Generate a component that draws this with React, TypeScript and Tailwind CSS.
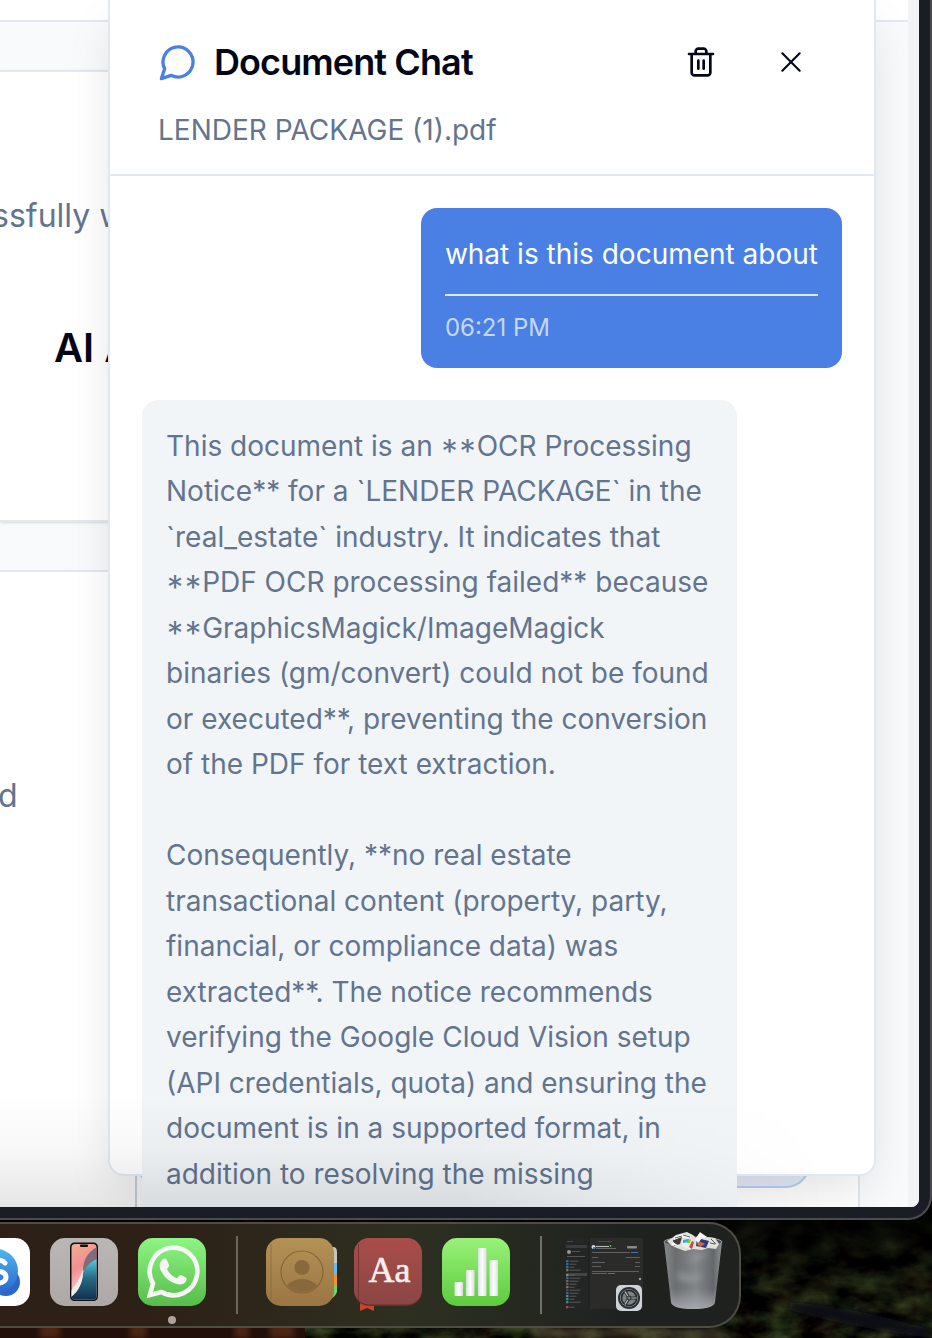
import type { ReactNode } from "react";

const REPLY = [
  "This document is an **OCR Processing Notice** for a `LENDER PACKAGE` in the `real_estate` industry. It indicates that **PDF OCR processing failed** because **GraphicsMagick/ImageMagick\nbinaries (gm/convert) could not be found or executed**, preventing the conversion of the PDF for text extraction.",
  "Consequently, **no real estate transactional content (property, party, financial, or compliance data) was extracted**. The notice recommends verifying the Google Cloud Vision setup (API credentials, quota) and ensuring the document is in a supported format, in addition to resolving the missing",
].join("\n\n");

/* Asterisks that open a capitalised phrase use the capital-height glyphs. */
function MessageText({ text }: { text: string }) {
  return (
    <p className="whitespace-pre-line">
      {text.split(/(\*\*(?=[A-Z]))/).map((part, i) =>
        part === "**" ? (
          <span key={i} className="[font-feature-settings:'case'_1]">
            {part}
          </span>
        ) : (
          part
        ),
      )}
    </p>
  );
}

function StrokeIcon({ className, children }: { className: string; children: ReactNode }) {
  return (
    <svg
      viewBox="0 0 24 24"
      fill="none"
      stroke="currentColor"
      strokeLinecap="round"
      strokeLinejoin="round"
      aria-hidden="true"
      className={className}
    >
      {children}
    </svg>
  );
}

function Wallpaper() {
  return (
    <svg
      className="absolute inset-x-0 bottom-0 h-36 w-full"
      viewBox="0 0 932 144"
      preserveAspectRatio="none"
      aria-hidden="true"
    >
      <defs>
        <filter id="leaves" x="0" y="0" width="100%" height="100%" colorInterpolationFilters="sRGB">
          <feTurbulence type="fractalNoise" baseFrequency="0.03 0.05" numOctaves="4" seed="8" />
          <feColorMatrix values="0.45 0.1 0 0 -0.19  0.55 0 0 0 -0.18  0.25 0 0 0 -0.08  0 0 0 0 1" />
        </filter>
        <linearGradient id="shade" x1="0" y1="0" x2="0" y2="1">
          <stop offset="0.15" stopColor="#000" stopOpacity="0.9" />
          <stop offset="0.5" stopColor="#000" stopOpacity="0.4" />
          <stop offset="1" stopColor="#000" stopOpacity="0" />
        </linearGradient>
        <filter id="soft">
          <feGaussianBlur stdDeviation="3" />
        </filter>
      </defs>
      <rect width="932" height="144" filter="url(#leaves)" />
      <rect width="932" height="144" fill="url(#shade)" />
      <path d="M0 130h305v14H0z" fill="#220f0a" />
      <path d="M235 130h14v14h-14zM270 130h24v14h-24zM40 130h20v14H40zM130 130h16v14h-16z" fill="#5c2c16" opacity="0.8" filter="url(#soft)" />
      <path d="M790 108q70 6 142 28v8q-80-10-142-28z" fill="#0b0e16" filter="url(#soft)" />
      <path d="M530 134h180l20 10H530z" fill="#6b5a44" opacity="0.5" filter="url(#soft)" />
    </svg>
  );
}

function BackgroundPage() {
  return (
    <div className="flex h-full bg-slate-50">
      <div className="flex min-w-0 flex-1 flex-col">
        <div className="h-[22px] shrink-0 border-b-2 border-slate-200 bg-white" />
        <div className="mr-12 flex min-h-0 flex-1 flex-col">
          <section className="mt-12 flex h-[452px] shrink-0 flex-col border-y-2 border-slate-200 bg-white pt-[120px] shadow-sm">
            <p className="-ml-2 text-[32px] leading-12 text-slate-500">ssfully w</p>
            <h2 className="mt-[84px] ml-[54px] text-[40px] leading-12 font-semibold text-slate-950">AI A</h2>
          </section>
          <section className="mt-12 flex min-h-0 flex-1 flex-col border-t-2 border-r-2 border-slate-200 bg-white">
            <p className="-ml-0.5 pt-[200px] text-[32px] leading-12 text-slate-500">d</p>
            <div className="mt-auto ml-[135px] flex h-[340px] items-start border-l-2 border-slate-300 pr-12">
              <div className="h-[321px] flex-1 rounded-3xl border-2 border-[#b9d2f8] bg-[#e6edf9]" />
            </div>
          </section>
        </div>
      </div>
      <div className="w-[11px] bg-[#f2f3f5]" />
    </div>
  );
}

function ChatPanel() {
  return (
    <aside
      aria-label="Document Chat"
      className="absolute top-0 right-[43px] bottom-[31px] left-[108px] flex flex-col rounded-b-2xl border-x-2 border-b-2 border-slate-200 bg-white shadow-[0_20px_50px_-8px_rgba(0,0,0,0.13)]"
    >
      <header className="border-b-2 border-slate-200 pt-[26px] pr-[47px] pb-6 pl-12">
        <div className="flex items-center justify-between">
          <h1 className="flex items-center gap-4 text-4xl font-semibold tracking-tight text-slate-950">
            <StrokeIcon className="size-10 stroke-2 text-[#4a80e4]">
              <path d="M7.9 20A9 9 0 1 0 4 16.1L2 22Z" />
            </StrokeIcon>
            Document Chat
          </h1>
          <div className="flex gap-[18px] text-slate-950">
            <button type="button" aria-label="Clear chat" className="flex size-18 items-center justify-center">
              <StrokeIcon className="size-8 stroke-2">
                <path d="M3 6h18M19 6v14c0 1-1 2-2 2H7c-1 0-2-1-2-2V6M8 6V4c0-1 1-2 2-2h4c1 0 2 1 2 2v2M10 11v6M14 11v6" />
              </StrokeIcon>
            </button>
            <button type="button" aria-label="Close chat" className="flex size-18 items-center justify-center">
              <StrokeIcon className="size-8 stroke-[1.6]">
                <path d="M18.500 5.500l-13 13M5.500 5.500l13 13" />
              </StrokeIcon>
            </button>
          </div>
        </div>
        <p className="mt-3 text-[28px] leading-10 text-slate-500">LENDER PACKAGE (1).pdf</p>
      </header>

      <div className="flex min-h-0 flex-1 flex-col gap-8 p-8 text-[28px] leading-relaxed">
        <div className="shrink-0 self-end rounded-2xl bg-[#4a80e4] p-6 text-white">
          <p>what is this document about</p>
          <time className="mt-4 block border-t-2 border-slate-200 pt-4 text-2xl text-white/70">06:21 PM</time>
        </div>
        <div className="max-w-[85%] shrink-0 self-start rounded-2xl bg-[#f1f5f8] p-6 text-slate-500">
          <MessageText text={REPLY} />
        </div>
      </div>
    </aside>
  );
}

function SkypeIcon() {
  return (
    <svg viewBox="0 0 68 68" className="-ml-[38px] size-17 shrink-0" aria-hidden="true">
      <defs>
        <linearGradient id="sky" x1="0" y1="0" x2="0" y2="1">
          <stop offset="0" stopColor="#4fb5ed" />
          <stop offset="1" stopColor="#2b67c9" />
        </linearGradient>
      </defs>
      <rect width="68" height="68" rx="15" fill="#fff" />
      <circle cx="44" cy="44" r="14" fill="#2c66cb" />
      <circle cx="34" cy="33" r="22" fill="url(#sky)" />
      <path
        d="M43 25c-3-4-17-5-17 2 0 8 18 3 18 12 0 8-15 8-19 1"
        fill="none"
        stroke="#fff"
        strokeWidth="5"
        strokeLinecap="round"
      />
    </svg>
  );
}

function PhoneIcon() {
  return (
    <svg viewBox="0 0 68 68" className="size-17 shrink-0" aria-hidden="true">
      <defs>
        <linearGradient id="phoneBg" x1="0" y1="0" x2="0" y2="1">
          <stop offset="0" stopColor="#b9b7b6" />
          <stop offset="1" stopColor="#aea8a5" />
        </linearGradient>
        <linearGradient id="pink" x1="0" y1="0" x2="0.3" y2="1">
          <stop offset="0" stopColor="#f2b295" />
          <stop offset="0.45" stopColor="#f08f90" />
          <stop offset="1" stopColor="#f4e6e6" />
        </linearGradient>
        <linearGradient id="teal" x1="0" y1="0" x2="0" y2="1">
          <stop offset="0" stopColor="#54cfe0" />
          <stop offset="0.45" stopColor="#276a86" />
          <stop offset="1" stopColor="#102c4a" />
        </linearGradient>
        <clipPath id="phoneScreen">
          <rect x="21.500" y="6" width="25" height="55.500" rx="3.500" />
        </clipPath>
      </defs>
      <rect width="68" height="68" rx="15" fill="url(#phoneBg)" />
      <rect x="20" y="4.500" width="28" height="58.500" rx="4.500" fill="#111" />
      <g clipPath="url(#phoneScreen)">
        <rect x="21" y="5" width="27" height="58" fill="url(#pink)" />
        <path d="M47 9C37 15 33 22 33 33l14-10z" fill="#806c7c" />
        <path d="M47 21c-8 4-13 9-14 15-1 11-6 18-12 23v4h27z" fill="url(#teal)" />
        <path d="M33 32c-3 9-9 17-12 21v6c8-6 12-15 12-27z" fill="#f2eeee" />
      </g>
      <rect x="30" y="6.500" width="8" height="2.500" rx="1" fill="#111" />
    </svg>
  );
}

function WhatsAppIcon() {
  return (
    <svg viewBox="0 0 68 68" className="size-17" aria-hidden="true">
      <defs>
        <linearGradient id="wa" x1="0" y1="0" x2="0" y2="1">
          <stop offset="0" stopColor="#8df582" />
          <stop offset="1" stopColor="#56bd4a" />
        </linearGradient>
      </defs>
      <rect width="68" height="68" rx="15" fill="url(#wa)" />
      <path
        d="M11.800 57l3.200-11.500A23.800 23.800 0 1 1 23.500 54Z"
        fill="none"
        stroke="#f5f6f5"
        strokeWidth="4.600"
        strokeLinejoin="miter"
      />
      <path
        d="M24.500 21.500c1.500-1.600 3.500-1.200 4.300.5l2 4.600c.5 1.200 0 2-2 4.400 2.500 4.500 5.500 7.500 10.200 9.300 2.500-3 3-3.800 4.500-3.100l4.500 2.200c1 .6.600 3.400-.6 4.800-2.500 2.700-6.500 2.500-9.400 1.500-7.500-2.600-11.500-6.200-15-12.700-2.200-4.300-1.700-8.500 1.500-11.500z"
        fill="#f5f6f5"
      />
    </svg>
  );
}

function ContactsIcon() {
  return (
    <svg viewBox="0 0 68 68" className="size-17 shrink-0 overflow-visible" aria-hidden="true">
      <defs>
        <linearGradient id="leather" x1="0" y1="0" x2="0" y2="1">
          <stop offset="0" stopColor="#b39255" />
          <stop offset="1" stopColor="#9b7544" />
        </linearGradient>
        <clipPath id="portrait">
          <circle cx="36" cy="34" r="20" />
        </clipPath>
      </defs>
      <path d="M60 9h7q4 0 4 5v11H60z" fill="#c7c5bd" />
      <path d="M60 25h11v11H60z" fill="#65bdf5" />
      <path d="M60 36h11v12H60z" fill="#f1922c" />
      <path d="M60 48h11v6q-3 8-11 7z" fill="#6ad568" />
      <rect width="68" height="68" rx="15" fill="url(#leather)" />
      <path d="M5 6v56" stroke="#876637" strokeWidth="1" opacity="0.7" />
      <circle cx="36" cy="34" r="21" fill="none" stroke="#876537" strokeWidth="1.200" />
      <circle cx="36" cy="29.500" r="7.500" fill="#89683b" />
      <ellipse cx="36" cy="54" rx="17" ry="13" fill="#89683b" clipPath="url(#portrait)" />
    </svg>
  );
}

function DictionaryIcon() {
  return (
    <svg viewBox="0 0 68 68" className="size-17 shrink-0 overflow-visible" aria-hidden="true">
      <defs>
        <linearGradient id="red" x1="0" y1="0" x2="0" y2="1">
          <stop offset="0" stopColor="#aa4d4a" />
          <stop offset="1" stopColor="#8b4644" />
        </linearGradient>
      </defs>
      <path d="M6 62h14v11l-7-3-7 3z" fill="#c9432e" />
      <rect y="1" width="68" height="67" rx="15" fill="#6d2d2c" />
      <rect width="68" height="66.500" rx="15" fill="url(#red)" />
      <path d="M4.500 6v56" stroke="#793534" strokeWidth="1" />
      <text x="35.500" y="44" textAnchor="middle" fill="#f6efee" fontSize="36" fontFamily="'Liberation Serif', serif" stroke="#f6efee" strokeWidth="0.600">
        Aa
      </text>
    </svg>
  );
}

function NumbersIcon() {
  return (
    <svg viewBox="0 0 68 68" className="size-17 shrink-0" aria-hidden="true">
      <defs>
        <linearGradient id="green" x1="0" y1="0" x2="0" y2="1">
          <stop offset="0" stopColor="#98f278" />
          <stop offset="1" stopColor="#5ecb3f" />
        </linearGradient>
        <linearGradient id="bar" x1="0" y1="0" x2="1" y2="0">
          <stop offset="0" stopColor="#d9dede" />
          <stop offset="0.5" stopColor="#fff" />
          <stop offset="1" stopColor="#d9dede" />
        </linearGradient>
      </defs>
      <rect width="68" height="68" rx="15" fill="url(#green)" />
      <g fill="url(#bar)">
        <rect x="12.500" y="44" width="8.500" height="14" rx="1" />
        <rect x="24" y="32" width="8.500" height="26" rx="1" />
        <rect x="36" y="10" width="8.500" height="48" rx="1" />
        <rect x="47.500" y="22" width="8.500" height="36" rx="1" />
      </g>
    </svg>
  );
}

const SIDEBAR_ROWS = [
  { y: 22, c: "#3975c4" },
  { y: 25, c: "#3975c4" },
  { y: 28, c: "#3975c4" },
  { y: 31, c: "#58ad52" },
  { y: 36, c: "#999" },
  { y: 39, c: "#3975c4" },
  { y: 42, c: "#777" },
  { y: 45, c: "#a45a68" },
  { y: 48, c: "#8a8a8a" },
  { y: 51, c: "#555" },
  { y: 54, c: "#3975c4" },
  { y: 57, c: "#69a2a9" },
  { y: 60, c: "#3ba0b8" },
  { y: 63, c: "#4ba4ad" },
  { y: 68, c: "#c45245" },
];

function MinimizedWindow() {
  return (
    <svg viewBox="0 0 78 74" className="h-[74px] w-[78px] shrink-0" aria-hidden="true">
      <rect width="78" height="71" rx="1" fill="#2b2b2a" />
      <rect width="24" height="71" fill="#242625" />
      <path d="M24 0v71" stroke="#1a1b1a" />
      <path d="M2 3.500h6M33 3.500h14" stroke="#484848" />
      <rect x="1" y="7" width="21" height="3" fill="#3a3b3a" />
      <circle cx="4" cy="14" r="2" fill="#999" />
      <path d="M7 13.500h8M2 18.500h18" stroke="#555" />
      <rect x="1" y="35" width="21" height="3" fill="#454644" />
      {SIDEBAR_ROWS.map((row) => (
        <g key={row.y} opacity="0.8">
          <rect x="1" y={row.y} width="2.500" height="2.200" rx="0.500" fill={row.c} />
          <rect x="4.500" y={row.y + 0.7} width={5 + (row.y % 4) * 2} height="1" fill="#656665" />
        </g>
      ))}
      <circle cx="28.500" cy="9" r="2" fill="#d5ddeb" />
      <path d="M28 9h2v2h-2z" fill="#3b76d9" />
      <path d="M31 8.500h13" stroke="#b8b8b8" strokeWidth="1.200" />
      <circle cx="45.500" cy="8" r="0.900" fill="#54c34a" />
      <path d="M31 10.500h20" stroke="#666" />
      <rect x="62" y="8" width="10" height="2.500" rx="1" fill="#8a8a8a" />
      <path d="M27 14.500h38M27 19.500h6M61 19.500h14M27 24.500h13M70 24.500h5M27 28.500h9M70 28.500h5M27 33.500h47M27 35.500h15" stroke="#666" strokeWidth="0.900" />
      <path d="M66 14.500h7M43 35.500h7" stroke="#3975c4" />
      <circle cx="75" cy="41" r="1.200" fill="#999" />
      <rect x="51" y="47" width="26" height="26" rx="5" fill="#cdd3d8" />
      <circle cx="64" cy="60" r="11" fill="#2c3033" />
      <circle cx="64" cy="60" r="9" fill="#9ea4a7" />
      <circle cx="64" cy="60" r="7.600" fill="#7c8285" stroke="#24282a" strokeWidth="1.600" />
      <path d="M64 60h7M64 60l-3.500-6M64 60l-3.500 6" stroke="#24282a" strokeWidth="3" />
      <path d="M64 60h7.500M64 60l-4-6.500M64 60l-4 6.500" stroke="#c3c9cb" strokeWidth="1.200" />
      <circle cx="64" cy="60" r="2" fill="#7c8285" stroke="#24282a" strokeWidth="1" />
    </svg>
  );
}

function TrashIcon() {
  return (
    <svg viewBox="0 0 60 78" className="h-[78px] w-15 shrink-0" aria-hidden="true">
      <defs>
        <linearGradient id="bin" x1="0" y1="0" x2="1" y2="0">
          <stop offset="0" stopColor="#85898a" />
          <stop offset="0.2" stopColor="#6a6e70" />
          <stop offset="0.55" stopColor="#828688" />
          <stop offset="0.85" stopColor="#64686a" />
          <stop offset="1" stopColor="#8d9192" />
        </linearGradient>
        <linearGradient id="binBase" x1="0" y1="0" x2="0" y2="1">
          <stop offset="0.7" stopColor="#aeb2b4" stopOpacity="0" />
          <stop offset="1" stopColor="#aeb2b4" stopOpacity="0.8" />
        </linearGradient>
        <filter id="gloss">
          <feGaussianBlur stdDeviation="3" />
        </filter>
      </defs>
      <ellipse cx="30" cy="10" rx="29" ry="5" fill="#4c5052" stroke="#a0a4a5" />
      <path d="M1 10q6 4 10 5h38q6-1 10-5l-7 60q-1 7-22 7T8 70z" fill="url(#bin)" />
      <path d="M1 10q6 4 10 5h38q6-1 10-5l-7 60q-1 7-22 7T8 70z" fill="url(#binBase)" />
      <path d="M4 9l5-3 4-3 7-2 4-1 6 3 3 3 4-6 7 5 8 1 4 6-3 5-8-1-6 2-9-1-8 2-8-3-5-2z" fill="#e0e0dd" />
      <path d="M10 8l9-3-2 7-6 2z" fill="#3d3d3d" />
      <path d="M11 5l8-3 9 2-2 2-8-1-7 3zM10 10l6 4-7-1z" fill="#fff" />
      <path d="M12 6l7-2M20 3l7 2M48 7l5 5M47 11l5 1" stroke="#555" />
      <path d="M20 8h9l-2 9-8-3z" fill="#eee" />
      <path d="M20 8l5-1 3 1-2 2-6 1z" fill="#27b1d2" />
      <path d="M25 8h3l-1 3h-3z" fill="#83cb38" />
      <path d="M29 9l2 1-2 7-3-2z" fill="#cd4936" />
      <path d="M34 6l12 3-3 7-10-2z" fill="#2c3b7c" />
      <path d="M36 9l6 3-5 3-3-3z" fill="#cf6840" />
      <path d="M32 7l5-6 7 4-5 1-4 5z" fill="#f8f8f8" />
      <path d="M25 26q14-3 21-8-5 11-21 10zM14 39q12 8 29 4-12 9-28 4z" fill="#c2c6c8" opacity="0.4" filter="url(#gloss)" />
    </svg>
  );
}

function Dock() {
  return (
    <nav
      aria-label="Dock"
      className="relative mt-[2px] mb-[10px] flex h-[106px] w-fit items-start gap-5 rounded-r-[32px] border-y-2 border-r-2 border-[#4f4c43] bg-linear-to-r from-[#2d2017] from-20% via-[#2d3020] via-55% to-[#1f211f] to-85% pt-[14px] pr-4"
    >
      <SkypeIcon />
      <PhoneIcon />
      <div className="flex shrink-0 flex-col items-center gap-[10px]">
        <WhatsAppIcon />
        <span className="size-2 rounded-full bg-[#afa49d]" />
      </div>
      <span className="-mt-[2px] mr-2 ml-[10px] h-[78px] w-[2px] bg-[#6d675f]" />
      <ContactsIcon />
      <DictionaryIcon />
      <NumbersIcon />
      <span className="-mt-[2px] mr-[3px] ml-[10px] h-[78px] w-[2px] bg-[#6f706a]" />
      <MinimizedWindow />
      <div className="-mt-[6px]">
        <TrashIcon />
      </div>
    </nav>
  );
}

export default function App() {
  return (
    <div className="relative flex h-screen flex-col overflow-hidden bg-black font-['Inter',sans-serif]">
      <Wallpaper />
      <main className="relative flex min-h-0 flex-1 rounded-br-3xl border-r-2 border-b-2 border-[#4b4c52] bg-[#1a1d25] pr-[11px] pb-[11px]">
        <div className="relative min-w-0 flex-1 overflow-hidden rounded-br-lg">
          <BackgroundPage />
          <ChatPanel />
          <div className="pointer-events-none absolute inset-x-0 bottom-0 h-28 bg-linear-to-t from-black/10 via-black/3 to-transparent mask-r-from-50% mask-r-to-90%" />
        </div>
      </main>
      <Dock />
    </div>
  );
}
